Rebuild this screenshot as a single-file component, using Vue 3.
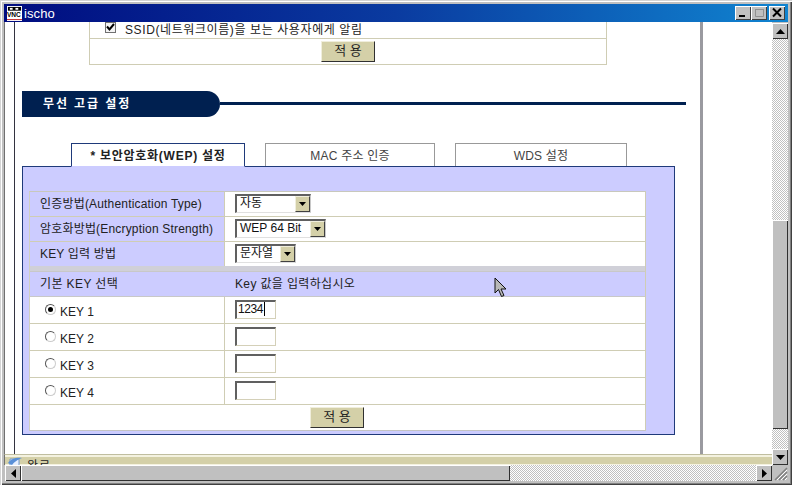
<script setup>
const keys = [
  { name: 'KEY 1', value: '1234', on: true },
  { name: 'KEY 2', value: '', on: false },
  { name: 'KEY 3', value: '', on: false },
  { name: 'KEY 4', value: '', on: false },
]
const settings = [
  { label: '인증방법(Authentication Type)', value: '자동', cls: 'w76' },
  { label: '암호화방법(Encryption Strength)', value: 'WEP 64 Bit', cls: 'w91' },
  { label: 'KEY 입력 방법', value: '문자열', cls: 'w61' },
]
</script>

<template>
  <div class="window">
    <div class="titlebar">
      <svg class="appicon" width="15" height="15" viewBox="0 0 16 16">
        <rect width="16" height="16" fill="#fff" />
        <rect x="1" y="1" width="14" height="4" fill="#000" />
        <rect x="3" y="2" width="3" height="2" fill="#fff" />
        <rect x="9" y="2" width="3" height="2" fill="#fff" />
        <text x="0" y="12" font-family="Liberation Sans" font-size="7" font-weight="700" fill="#000">VNC</text>
        <rect x="0" y="14" width="16" height="1" fill="#c02020" />
      </svg>
      <span class="title">ischo</span>
      <div class="controls">
        <div class="wbtn">
          <svg width="14" height="12" viewBox="0 0 14 12"><rect x="3" y="8" width="6" height="2" fill="#000" /></svg>
        </div>
        <div class="wbtn">
          <svg width="14" height="12" viewBox="0 0 14 12"><path d="M3.5 2.5h8v7h-8z" fill="none" stroke="#909090" /><path d="M3 2h9v1H3z" fill="#909090" /></svg>
        </div>
        <div class="wbtn close">
          <svg width="14" height="12" viewBox="0 0 14 12"><path d="M3 1.5l8 8M11 1.5l-8 8" stroke="#000" stroke-width="2" fill="none" /></svg>
        </div>
      </div>
    </div>

    <div class="body">
      <div class="client">
        <div class="page">
          <div class="sheet">
            <div class="top-table">
              <div class="top-row">
                <span class="check">
                  <svg width="9" height="9" viewBox="0 0 9 9"><path d="M1 3.5l2.5 3L8 1" stroke="#000" stroke-width="2" fill="none" /></svg>
                </span>
                <span class="top-text">SSID(네트워크이름)을 보는 사용자에게 알림</span>
              </div>
              <div class="top-btn-row"><div class="btn">적 용</div></div>
            </div>

            <div class="banner">
              <div class="banner-head">무선 고급 설정</div>
              <div class="banner-line"></div>
            </div>

            <div class="tabs">
              <div class="tab active">* 보안암호화(WEP) 설정</div>
              <div class="tab t2">MAC 주소 인증</div>
              <div class="tab t3">WDS 설정</div>
            </div>

            <div class="panel">
              <div class="grid">
                <div v-for="s in settings" :key="s.label" class="row set">
                  <div class="lab">{{ s.label }}</div>
                  <div class="val">
                    <div class="select" :class="s.cls">
                      <span class="sel-text">{{ s.value }}</span>
                      <span class="sel-arrow"><svg width="7" height="4" viewBox="0 0 7 4"><path d="M0 0h7L3.5 4z" fill="#000" /></svg></span>
                    </div>
                  </div>
                </div>
                <div class="sep"></div>
                <div class="row head">
                  <div class="lab">기본 KEY 선택</div>
                  <div class="val headval">Key 값을 입력하십시오</div>
                </div>
                <div v-for="k in keys" :key="k.name" class="row keyrow">
                  <div class="keylab">
                    <span class="radio" :class="{ on: k.on }"></span>
                    <span class="keyname">{{ k.name }}</span>
                  </div>
                  <div class="val keyval">
                    <div class="input">{{ k.value }}<i v-if="k.on" class="caret"></i></div>
                  </div>
                </div>
                <div class="btn-row"><div class="btn">적 용</div></div>
              </div>
            </div>
          </div>

          <svg class="cursor" width="14" height="22" viewBox="0 0 14 22">
            <path d="M1 1v15l3.5-3.5 3 7 2.5-1-3-6.500h5z" fill="#b8b8b8" stroke="#111" stroke-width="1" />
          </svg>
        </div>
        <div class="status">
          <svg class="stat-icon" width="16" height="12" viewBox="0 0 16 12">
            <path d="M3 3h9v9H3z" fill="#e8f0ff" stroke="#7098d0" />
            <path d="M1 7c3-5 10-6 14-5-3 1-8 4-10 7z" fill="#5a90d8" />
          </svg>
          <span class="stat-text">완료</span>
        </div>
      </div>

      <div class="vscroll">
        <div class="sbtn"><svg width="9" height="5" viewBox="0 0 9 5"><path d="M4.500 0l4.500 5H0z" fill="#000" /></svg></div>
        <div class="track t1"></div>
        <div class="vthumb"></div>
        <div class="track t2v"></div>
        <div class="sbtn"><svg width="9" height="5" viewBox="0 0 9 5"><path d="M0 0h9L4.500 5z" fill="#000" /></svg></div>
      </div>
    </div>

    <div class="hrow">
      <div class="hscroll">
        <div class="sbtn"><svg width="5" height="9" viewBox="0 0 5 9"><path d="M5 0v9L0 4.500z" fill="#000" /></svg></div>
        <div class="hthumb"></div>
        <div class="track grow"></div>
        <div class="sbtn"><svg width="5" height="9" viewBox="0 0 5 9"><path d="M0 0v9l5-4.500z" fill="#000" /></svg></div>
      </div>
      <div class="grip">
        <svg width="16" height="16" viewBox="0 0 16 16">
          <path d="M15 3L3 15M15 7l-8 8M15 11l-4 4" stroke="#808080" stroke-width="1.500" fill="none" />
          <path d="M15 5L5 15M15 9l-6 6M15 13l-2 2" stroke="#fff" stroke-width="1" fill="none" />
        </svg>
      </div>
    </div>
  </div>
</template>

<style>
html, body { margin: 0; padding: 0; overflow: hidden; }
</style>

<style scoped>
.window {
  width: 792px;
  height: 485px;
  box-sizing: border-box;
  padding: 4px;
  background: #c0c0c0;
  display: flex;
  flex-direction: column;
  overflow: hidden;
  box-shadow: inset 1px 1px 0 #d4d4d4, inset 2px 2px 0 #fff, inset -1px -1px 0 #404040, inset -2px -2px 0 #808080;
  font-family: "Liberation Sans", "Noto Sans CJK KR", sans-serif;
  font-size: 12px;
  color: #222;
}
.titlebar {
  height: 18px;
  flex: none;
  display: flex;
  align-items: center;
  padding-left: 3px;
  background: linear-gradient(90deg, #000c80 0%, #0a3ba0 50%, #1084d0 100%);
}
.appicon { flex: none; }
.title {
  color: #fff;
  font-size: 13px;
  margin-left: 2px;
  letter-spacing: 0.1px;
  font-family: "Liberation Sans", sans-serif;
}
.controls { margin-left: auto; display: flex; padding-right: 3px; }
.wbtn {
  width: 16px;
  height: 14px;
  background: #c0c0c0;
  box-shadow: inset 1px 1px 0 #fff, inset -1px -1px 0 #404040;
  display: flex;
  align-items: center;
  justify-content: center;
}
.wbtn.close { margin-left: 2px; }

.body { flex: 1; min-height: 0; display: flex; }
.client { flex: 1; min-width: 0; display: flex; flex-direction: column; }
.page {
  flex: 1;
  min-height: 0;
  position: relative;
  overflow: hidden;
  background: #fff;
  border-left: 1px solid #707070;
}
.sheet {
  width: 685px;
  height: 100%;
  margin-left: 9px;
  box-sizing: content-box;
  border-left: 1px solid #9a9a9a;
  border-right: 3px solid;
  border-image: linear-gradient(90deg, #333340, #9a9aa0) 1;
  border-top: 0;
  border-bottom: 0;
}
.top-table {
  width: 518px;
  height: 43px;
  margin-left: 74px;
  box-sizing: border-box;
  border: 1px solid #cfcdb4;
  border-top: 0;
  background: #fff;
}
.top-row {
  height: 17px;
  box-sizing: border-box;
  border-bottom: 1px solid #cfcdb4;
  display: flex;
  align-items: center;
  padding-left: 15px;
  gap: 9px;
  overflow: hidden;
  letter-spacing: 0.6px;
}
.top-text { margin-top: -3px; }
.check {
  width: 11px;
  height: 11px;
  margin-top: -5px;
  flex: none;
  background: #f4f4f4;
  border: 1px solid #707070;
  box-sizing: border-box;
  display: flex;
  align-items: center;
  justify-content: center;
}
.top-btn-row { height: 25px; display: flex; justify-content: center; padding-top: 2px; box-sizing: border-box; }
.btn {
  width: 54px;
  height: 21px;
  flex: none;
  box-sizing: border-box;
  background: #d4d0a8;
  border-top: 1px solid #f0eedc;
  border-left: 1px solid #f0eedc;
  border-right: 1px solid #303030;
  border-bottom: 1px solid #303030;
  text-align: center;
  line-height: 17px;
  font-size: 13px;
  color: #222;
}

.banner {
  display: flex;
  align-items: center;
  margin: 26px 0 0 7px;
  height: 26px;
  width: 664px;
}
.banner-head {
  width: 198px;
  height: 26px;
  flex: none;
  box-sizing: border-box;
  background: #002050;
  border-radius: 0 13px 13px 0;
  color: #fff;
  font-weight: 700;
  font-size: 12px;
  letter-spacing: 1.9px;
  line-height: 26px;
  padding-left: 21px;
}
.banner-line { flex: 1; height: 3px; margin-top: -1px; background: #002050; }

.tabs {
  display: flex;
  margin: 26px 0 0 56px;
  height: 23px;
  position: relative;
  z-index: 1;
}
.tab {
  box-sizing: border-box;
  height: 23px;
  background: #fff;
  border: 1px solid #999;
  border-bottom: 0;
  text-align: center;
  line-height: 24px;
  font-size: 12px;
  letter-spacing: 0.2px;
  color: #444;
}
.tab.active {
  width: 174px;
  height: 24px;
  border: 1px solid #1f3a7a;
  border-bottom: 1px solid #ccccff;
  font-weight: 700;
  font-size: 12px;
  letter-spacing: 0.75px;
  color: #222;
}
.tab.t2 { width: 170px; margin-left: 20px; }
.tab.t3 { width: 172px; margin-left: 20px; }

.panel {
  width: 653px;
  height: 269px;
  margin-left: 7px;
  box-sizing: border-box;
  background: #ccccff;
  border: 1px solid #1f3a7a;
  padding: 24px 0 0 6px;
}
.grid {
  width: 617px;
  height: 240px;
  box-sizing: border-box;
  border-top: 1px solid #c8c8bc;
  border-bottom: 1px solid #c4c4c4;
  border-left: 1px solid #d0d0c0;
  border-right: 1px solid #cfcdb4;
  background: #fff;
  display: flex;
  flex-direction: column;
}
.row { display: flex; box-sizing: border-box; border-bottom: 1px solid #cfcdb4; flex: none; }
.set { height: 25px; }
.set:nth-child(3) { height: 24px; border-bottom: 0; }
.lab {
  width: 195px;
  flex: none;
  box-sizing: border-box;
  background: #ccccff;
  padding-left: 10px;
  line-height: 24px;
  border-right: 1px solid #cfcdb4;
  font-size: 12px;
  letter-spacing: 0.18px;
  white-space: nowrap;
}
.val { flex: 1; padding-left: 10px; box-sizing: border-box; }
.sep { height: 5px; flex: none; background: #d0d0d8; }
.head { height: 26px; border-top: 1px solid #c8c8c8; border-bottom: 1px solid #c8c8c8; }
.head .lab { border-right: 0; line-height: 24px; letter-spacing: 0.4px; }
.head .headval { background: #ccccff; line-height: 24px; letter-spacing: 0.35px; }
.select {
  height: 19px;
  margin-top: 2px;
  box-sizing: border-box;
  background: #fff;
  border-top: 2px solid #606060;
  border-left: 2px solid #606060;
  border-right: 1px solid #c8c8c8;
  border-bottom: 1px solid #e0e0e0;
  display: flex;
  align-items: center;
  justify-content: space-between;
  padding-left: 3px;
}
.w76 { width: 76px; }
.w91 { width: 91px; }
.w61 { width: 61px; }
.sel-text { font-size: 12px; line-height: 14px; margin-top: -3px; color: #111; white-space: nowrap; }
.sel-arrow {
  width: 15px;
  height: 16px;
  flex: none;
  box-sizing: border-box;
  background: #d4d0a8;
  border-top: 1px solid #f0eedc;
  border-left: 1px solid #f0eedc;
  border-right: 1px solid #404040;
  border-bottom: 1px solid #404040;
  display: flex;
  align-items: center;
  justify-content: center;
}
.keyrow { height: 27px; }
.keylab {
  width: 195px;
  flex: none;
  box-sizing: border-box;
  border-right: 1px solid #cfcdb4;
  display: flex;
  align-items: center;
  padding-left: 15px;
  gap: 4px;
}
.radio {
  width: 11px;
  height: 11px;
  margin-top: -2px;
  flex: none;
  box-sizing: border-box;
  border-radius: 50%;
  background: #fff;
  border: 1px solid;
  border-color: #555 #ccc #ccc #555;
  position: relative;
}
.radio.on::after {
  content: "";
  position: absolute;
  left: 2px;
  top: 2px;
  width: 5px;
  height: 5px;
  border-radius: 50%;
  background: #000;
}
.keyname { font-size: 12px; line-height: 14px; margin-top: 4px; color: #222; }
.keyval { padding-top: 3px; }
.input {
  width: 41px;
  height: 19px;
  box-sizing: border-box;
  border-top: 2px solid #606060;
  border-left: 2px solid #606060;
  border-right: 1px solid #d4d0b8;
  border-bottom: 1px solid #d4d0b8;
  background: #fff;
  padding-left: 1px;
  font-size: 12px;
  line-height: 15px;
  color: #111;
  letter-spacing: -0.4px;
  position: relative;
}
.caret { display: inline-block; width: 1px; height: 14px; background: #000; vertical-align: top; margin-left: 1px; }
.btn-row { flex: 1; display: flex; justify-content: center; padding: 2px 1px 0 0; box-sizing: border-box; }
.cursor { position: absolute; left: 489px; top: 255px; }

.status {
  height: 11px;
  flex: none;
  box-sizing: border-box;
  background: #d4d0a8;
  border-top: 1px solid #c0bea0;
  box-shadow: inset 0 1px 0 #f4f2e0, inset 0 2px 0 #f4f2e0, inset 0 -1px 0 #f4f2e0;
  border-left: 1px solid #707070;
  overflow: hidden;
  display: flex;
  padding-left: 2px;
}
.stat-icon { flex: none; margin-top: 1px; }
.stat-text { margin-left: 4px; line-height: 16px; margin-top: 3px; font-size: 12px; letter-spacing: 1px; color: #222; }

.vscroll { width: 16px; flex: none; display: flex; flex-direction: column; margin-top: 1px; }
.sbtn {
  width: 16px;
  height: 16px;
  flex: none;
  box-sizing: border-box;
  background: #c0c0c0;
  box-shadow: inset 1px 1px 0 #fff, inset -1px -1px 0 #303030;
  display: flex;
  align-items: center;
  justify-content: center;
}
.track { background: repeating-conic-gradient(#c0c0c0 0 25%, #fff 0 50%) 0 0 / 2px 2px; }
.t1 { height: 181px; flex: none; }
.vthumb {
  height: 209px;
  flex: none;
  background: #c0c0c0;
  box-shadow: inset 1px 1px 0 #fff, inset -1px -1px 0 #303030;
}
.t2v { flex: 1; }
.hrow { height: 16px; flex: none; display: flex; }
.hscroll { flex: 1; display: flex; padding-left: 1px; }
.hthumb {
  width: 489px;
  flex: none;
  background: #c0c0c0;
  box-shadow: inset 1px 1px 0 #fff, inset -1px -1px 0 #303030;
}
.grow { flex: 1; }
.grip { width: 16px; flex: none; background: #c0c0c0; }
</style>
